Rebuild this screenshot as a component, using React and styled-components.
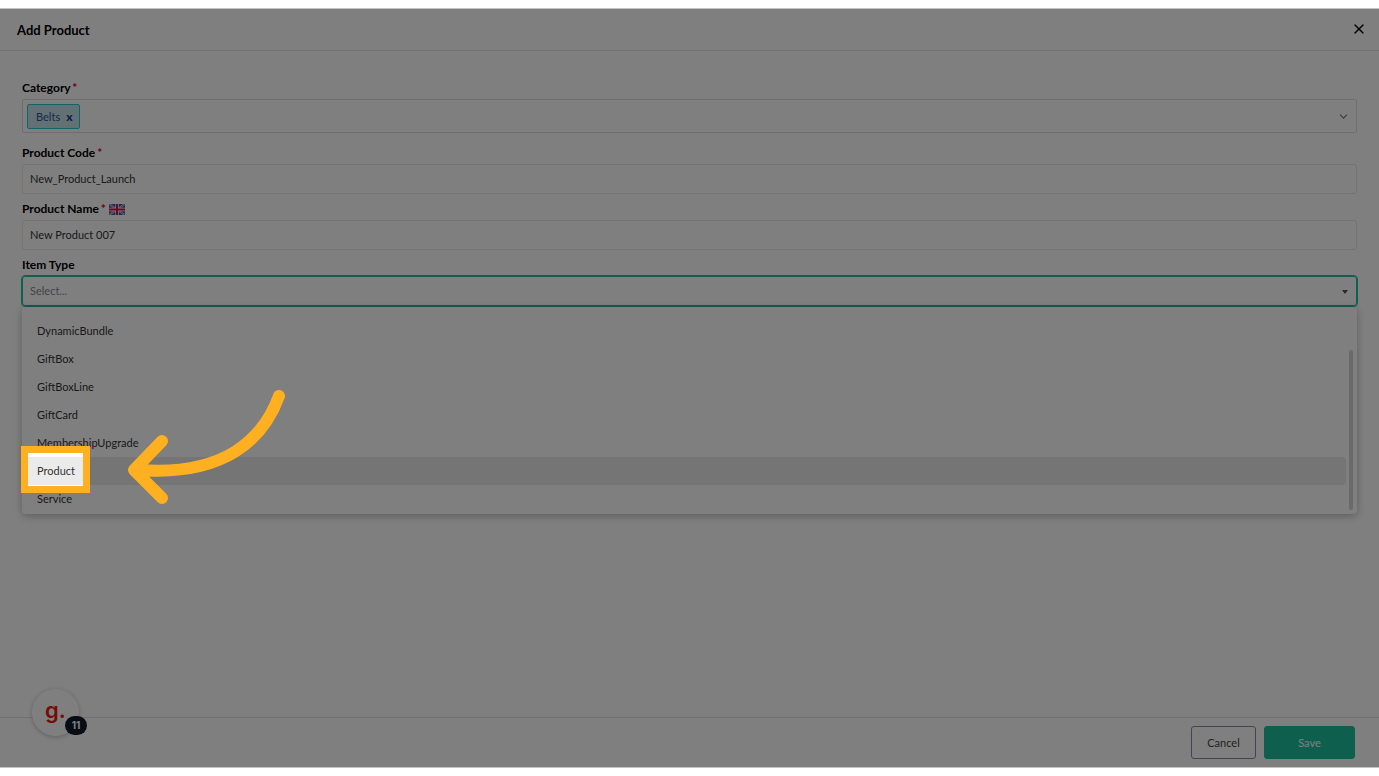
import React, { useState } from 'react'
import styled, { createGlobalStyle } from 'styled-components'
import { FiChevronDown, FiX } from 'react-icons/fi'

const itemTypes = [
  'DynamicBundle',
  'GiftBox',
  'GiftBoxLine',
  'GiftCard',
  'MembershipUpgrade',
  'Product',
  'Service',
]

export default function App() {
  const [code, setCode] = useState('New_Product_Launch')
  const [name, setName] = useState('New Product 007')
  const [type, setType] = useState('')

  return (
    <>
      <GlobalStyle />
      <Page>
        <Stage>
          <Header>
            <Title>Add Product</Title>
            <CloseButton aria-label="Close"><FiX size={16} /></CloseButton>
          </Header>

          <Form id="product-form">
            <Field $gap={9}>
              <Label htmlFor="category">Category <Required>*</Required></Label>
              <TagBox>
                <Tag>Belts <TagRemove type="button" aria-label="Remove Belts">x</TagRemove></Tag>
                <TagInput id="category" />
                <FiChevronDown size={13} color="#777" />
              </TagBox>
            </Field>
            <Field>
              <Label htmlFor="code">Product Code <Required>*</Required></Label>
              <TextInput id="code" value={code} onChange={(e) => setCode(e.target.value)} />
            </Field>
            <Field>
              <Label htmlFor="name">Product Name <Required>*</Required> <Flag /></Label>
              <TextInput id="name" value={name} onChange={(e) => setName(e.target.value)} />
            </Field>
            <Field>
              <Label htmlFor="type">Item Type</Label>
              <Combo>
                <ComboInput
                  id="type"
                  role="combobox"
                  aria-expanded="true"
                  aria-controls="type-list"
                  placeholder="Select..."
                  value={type}
                  onChange={(e) => setType(e.target.value)}
                />
                <Caret viewBox="0 0 8 4"><path d="M1 0h6L4 4z" fill="#555" /></Caret>
                <Menu>
                  <Options id="type-list" role="listbox">
                    {itemTypes.map((item) => (
                      <Option key={item} role="option" $active={item === 'Product'} onClick={() => setType(item)}>
                        {item}
                        {item === 'Product' && <Spotlight />}
                        {item === 'Product' && <Arrow />}
                      </Option>
                    ))}
                  </Options>
                  <ScrollThumb />
                </Menu>
              </Combo>
            </Field>
          </Form>

          <Footer>
            <Button type="button">Cancel</Button>
            <Button form="product-form" $primary>Save</Button>
          </Footer>

          <Widget type="button" aria-label="Guide">
            g.
            <Badge>11</Badge>
          </Widget>
        </Stage>
      </Page>
    </>
  )
}

function Flag() {
  return (
    <FlagSvg viewBox="0 0 16 11" role="img" aria-label="English">
      <path d="M0 0h16v11H0z" fill="#1560c8" />
      <path d="M0 0l16 11M16 0L0 11" stroke="#fff" strokeWidth="1.8" />
      <path d="M0 0l16 11M16 0L0 11" stroke="#e0103a" strokeWidth="0.8" />
      <path d="M8 0v11M0 5.5h16" stroke="#fff" strokeWidth="3.4" />
      <path d="M8 0v11M0 5.5h16" stroke="#e0103a" strokeWidth="2" />
    </FlagSvg>
  )
}

function Arrow() {
  return (
    <ArrowSvg viewBox="0 0 160 116" aria-hidden="true">
      <path d="M153 6C137 50 98 86 14 80M36 51L8 80l28 28" />
    </ArrowSvg>
  )
}

const GlobalStyle = createGlobalStyle`
  * {
    box-sizing: border-box;
  }
  body {
    margin: 0;
    background: #fff;
  }
  body, button, input {
    font-family: Lato, "Liberation Sans", sans-serif;
    font-size: 11px;
    color: #333;
  }
`;

const Page = styled.div`
  padding: 8px 0;
`;

const Stage = styled.main`
  position: relative;
  display: flex;
  flex-direction: column;
  min-height: calc(100vh - 16px);
  border: solid #c4c4c4;
  border-width: 1px 0;
  overflow: hidden;
`;

const Header = styled.header`
  display: flex;
  align-items: center;
  justify-content: space-between;
  height: 42px;
  padding: 0 12px 0 17px;
  border-bottom: 1px solid #e4e4e8;
`;

const Title = styled.h1`
  margin: 0;
  font-size: 13px;
  font-weight: 700;
  color: #000;
`;

const CloseButton = styled.button`
  display: flex;
  padding: 0 0 2px;
  border: 0;
  background: none;
  color: #000;
`;

const Form = styled.form`
  flex: 1;
  padding: 26px 22px 0;
`;

const Field = styled.div`
  margin-bottom: ${(p) => p.$gap || 4}px;
`;

const Label = styled.label`
  display: block;
  line-height: 22px;
  font-size: 12px;
  font-weight: 700;
  color: #000;
`;

const Required = styled.span`
  margin-left: -1px;
  font-weight: 900;
  color: #f0003c;
`;

const FlagSvg = styled.svg`
  width: 16px;
  height: 11px;
  vertical-align: -2px;
`;

const TagBox = styled.div`
  display: flex;
  align-items: center;
  height: 34px;
  padding: 0 6px 0 4px;
  border: 1px solid #dcdce4;
  border-radius: 2px;
`;

const Tag = styled.span`
  display: flex;
  align-items: center;
  gap: 6px;
  height: 25px;
  padding: 0 6px 0 8px;
  border: 1px solid #22c8d8;
  border-radius: 2px;
  background: #c4e2e6;
  color: #3b4fa0;
`;

const TagRemove = styled.button`
  padding: 0;
  border: 0;
  background: none;
  font-size: 12px;
  font-weight: 900;
  color: #24389c;
`;

const TagInput = styled.input`
  flex: 1;
  border: 0;
  outline: 0;
  background: none;
`;

const TextInput = styled.input`
  display: block;
  width: 100%;
  height: 30px;
  padding: 0 7px 1px;
  border: 1px solid #e8e8e8;
  border-radius: 3px;
  background: none;
`;

const Combo = styled.div`
  position: relative;
`;

const ComboInput = styled(TextInput)`
  border-color: #22be9e;
  outline: 1px solid #22be9e;

  &::placeholder {
    color: #888;
  }
`;

const Caret = styled.svg`
  position: absolute;
  top: 14px;
  right: 8px;
  width: 8px;
  height: 4px;
`;

const Menu = styled.div`
  position: absolute;
  top: 31px;
  left: 0;
  right: 0;
  display: flex;
  gap: 3px;
  padding: 10px 4px 1px 0;
  border-radius: 4px;
  background: #fff;
  box-shadow: 0 2px 8px rgba(0, 0, 0, 0.28);
`;

const Options = styled.ul`
  flex: 1;
  margin: 0;
  padding: 0;
  list-style: none;
`;

const Option = styled.li`
  position: relative;
  padding-left: 15px;
  line-height: 28px;
  border-radius: 3px;
  background: ${(p) => (p.$active ? '#ebebeb' : 'none')};
`;

const ScrollThumb = styled.div`
  width: 4px;
  margin: 33px 0 3px;
  border-radius: 2px;
  background: #d4d4d4;
`;

// The outer shadow dims everything except the framed option.
const Spotlight = styled.div`
  position: absolute;
  z-index: 10;
  top: -11px;
  left: -1px;
  width: 69px;
  height: 47px;
  border: 7px solid #ffb020;
  box-shadow: 0 0 0 3000px rgba(0, 0, 0, 0.5);
`;

const ArrowSvg = styled.svg`
  position: absolute;
  z-index: 11;
  top: -67px;
  left: 104px;
  width: 160px;
  height: 116px;

  path {
    fill: none;
    stroke: #ffb020;
    stroke-width: 12;
    stroke-linecap: round;
    stroke-linejoin: round;
  }
`;

const Footer = styled.footer`
  display: flex;
  justify-content: flex-end;
  gap: 8px;
  height: 50px;
  padding: 8px 24px;
  border-top: 1px solid #e0e0e4;
`;

const Button = styled.button`
  min-width: ${(p) => (p.$primary ? 91 : 65)}px;
  height: 33px;
  border: 1px solid ${(p) => (p.$primary ? '#1fbf9f' : '#888c98')};
  border-radius: 3px;
  background: ${(p) => (p.$primary ? '#1fbf9f' : '#fff')};
  color: ${(p) => (p.$primary ? '#fff' : '#444')};
`;

const Widget = styled.button`
  position: absolute;
  left: 32px;
  bottom: 31px;
  width: 47px;
  height: 47px;
  padding: 0 0 5px;
  border: 0;
  border-radius: 50%;
  background: #fff;
  box-shadow: 0 1px 5px rgba(0, 0, 0, 0.25);
  font: 600 22px Inter, sans-serif;
  color: #f01414;
`;

const Badge = styled.span`
  position: absolute;
  left: 33px;
  top: 27px;
  width: 22px;
  border-radius: 10px;
  background: #101828;
  font-size: 10px;
  font-weight: 700;
  line-height: 19px;
  color: #fff;
`;
